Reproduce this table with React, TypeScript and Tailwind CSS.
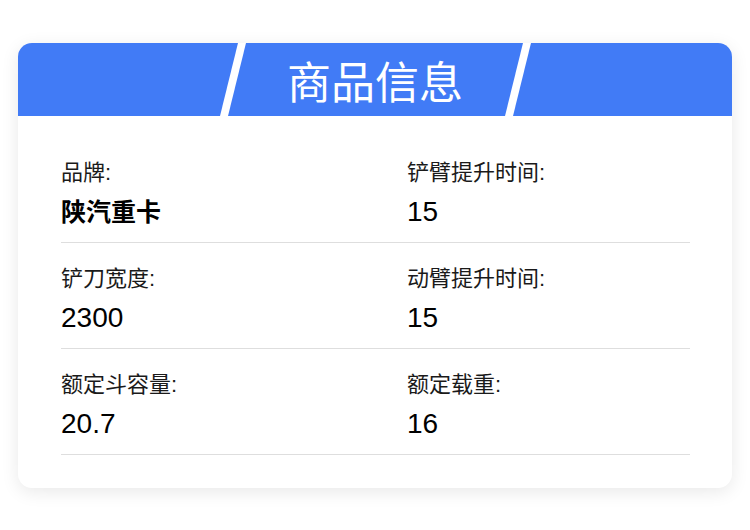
const rows = [
  [
    { label: "品牌:", value: "陕汽重卡", brand: true },
    { label: "铲臂提升时间:", value: "15" },
  ],
  [
    { label: "铲刀宽度:", value: "2300" },
    { label: "动臂提升时间:", value: "15" },
  ],
  [
    { label: "额定斗容量:", value: "20.7" },
    { label: "额定载重:", value: "16" },
  ],
];

function Cell({ label, value, brand }: { label: string; value: string; brand?: boolean }) {
  return (
    <div className="flex flex-col">
      <div className="text-[22px] leading-[30px] text-[#1a1a1a]">{label}</div>
      <div
        className={
          brand
            ? "mt-[6px] text-[25px] leading-[36px] font-bold text-black"
            : "mt-[6px] text-[28px] leading-[36px] text-black"
        }
      >
        {value}
      </div>
    </div>
  );
}

export default function App() {
  return (
    <div
      className="w-[750px] h-[530px] bg-white pt-[43px] px-[18px]"
      style={{ fontFamily: '"Liberation Sans", "Noto Sans CJK SC", sans-serif' }}
    >
      <div className="w-[714px] bg-white rounded-[14px] overflow-hidden shadow-[0_4px_18px_rgba(0,0,0,0.09)]">
        <div className="relative h-[73px] bg-[#417BF6] flex items-center justify-center">
          <svg className="absolute inset-0" width="714" height="73" viewBox="0 0 714 73">
            <polygon points="220,0 228,0 210,73 202,73" fill="#ffffff" />
            <polygon points="505,0 513,0 495,73 487,73" fill="#ffffff" />
          </svg>
          <h2
            className="relative text-white text-[44px] leading-none"
            style={{ fontFamily: '"Noto Sans CJK SC", sans-serif' }}
          >
            商品信息
          </h2>
        </div>
        <div className="px-[43px] pt-[21px] pb-[33px]">
          {rows.map((row, i) => (
            <div key={i} className="flex border-b border-[#dedede] pt-[21px] pb-[12px] w-[629px]">
              <div className="w-[346px]">
                <Cell {...row[0]} />
              </div>
              <div className="flex-1">
                <Cell {...row[1]} />
              </div>
            </div>
          ))}
        </div>
      </div>
    </div>
  );
}
